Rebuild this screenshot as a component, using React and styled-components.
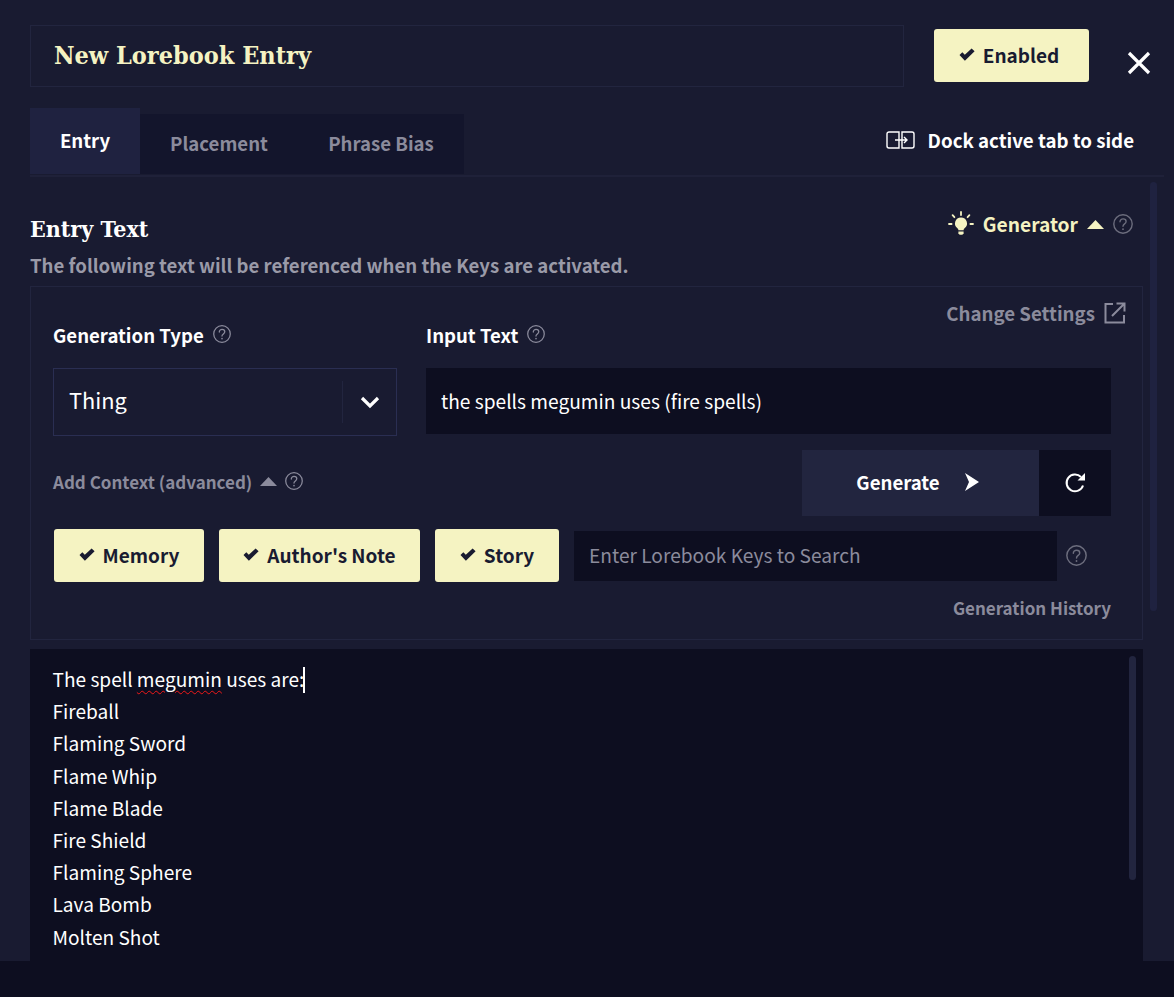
import React from "react";
import styled, { createGlobalStyle } from "styled-components";

const cream = "#f5f3c2";
const deep = "#0d0e20";
const panel = "#191b31";
const raised = "#22253f";
const muted = "#8b8b9c";

const GlobalStyle = createGlobalStyle`
  html, body {
    margin: 0;
    padding: 0;
    background: ${deep};
  }
  * {
    box-sizing: border-box;
  }
  body {
    font-family: "Noto Sans CJK SC", "Noto Sans", sans-serif;
    color: #fff;
  }
`;

const Modal = styled.div`
  width: 1174px;
  height: 961px;
  overflow: hidden;
  background: ${panel};
  padding: 25px 10px 0 30px;
`;

const Footer = styled.div`
  height: 36px;
  background: ${deep};
`;

const Header = styled.header`
  display: flex;
  align-items: flex-start;
`;

const TitleBox = styled.div`
  width: 874px;
  height: 62px;
  border: 1px solid ${raised};
  padding: 0 0 2px 23px;
  display: flex;
  align-items: center;
  font-family: "DejaVu Serif Condensed", "DejaVu Serif", serif;
  font-weight: 700;
  font-size: 25px;
  color: ${cream};
`;

const Toggle = styled.button`
  display: inline-flex;
  align-items: center;
  justify-content: center;
  gap: 8px;
  height: 53px;
  width: ${(p) => p.$width}px;
  flex: none;
  border: 0;
  border-radius: 3px;
  background: ${cream};
  color: ${panel};
  font: 600 19px/1 "Noto Sans CJK SC", sans-serif;
  padding: 0 0 2px;
`;

const EnabledToggle = styled(Toggle)`
  margin: 4px 0 0 30px;
  padding-right: 5px;
`;

const CloseButton = styled.button`
  background: none;
  border: 0;
  padding: 0;
  margin: 26px 0 0 38px;
  width: 24px;
  height: 24px;
  color: #fff;
  line-height: 0;
`;

const TabRow = styled.div`
  display: flex;
  justify-content: space-between;
  align-items: flex-end;
  margin-top: 21px;
  height: 69px;
  border-bottom: 2px solid #1f2139;
`;

const Tabs = styled.nav`
  display: flex;
  align-items: flex-end;
  padding-bottom: 1px;
`;

const Tab = styled.div`
  display: flex;
  align-items: center;
  justify-content: center;
  width: ${(p) => p.$width}px;
  height: ${(p) => (p.$active ? 66 : 60)}px;
  padding-bottom: 4px;
  background: ${(p) => (p.$active ? "#1f2240" : "#13152c")};
  color: ${(p) => (p.$active ? "#fff" : muted)};
  font-size: 18.6px;
  font-weight: 600;
`;

const DockAction = styled.div`
  display: flex;
  align-items: center;
  gap: 13px;
  font-size: 18.7px;
  font-weight: 600;
  padding: 0 30px 4px 0;
  height: 67px;
`;

const Content = styled.div`
  display: flex;
  gap: 7px;
  position: relative;
`;

const Main = styled.main`
  width: 1113px;
  flex: none;
`;

const ScrollTrack = styled.div`
  width: 7px;
  height: 429px;
  margin-top: 5px;
  border-radius: 4px;
  background: #1f2240;
  flex: none;
`;

const SectionHead = styled.div`
  display: flex;
  justify-content: space-between;
  align-items: center;
  padding: 38px 10px 0 0;
  height: 67px;
`;

const SectionTitle = styled.h2`
  margin: -2px 0 0;
  font-family: "DejaVu Serif Condensed", "DejaVu Serif", serif;
  font-weight: 700;
  font-size: 23px;
  line-height: 30px;
`;

const GeneratorToggle = styled.div`
  display: flex;
  align-items: center;
  gap: 9px;
  margin-top: -11px;
  color: ${cream};
  font-size: 19.2px;
  font-weight: 600;
`;

const Description = styled.p`
  margin: 0;
  height: 42px;
  padding-top: 7px;
  line-height: 28px;
  font-size: 18.6px;
  font-weight: 600;
  color: #9a9aa8;
`;

const GeneratorPanel = styled.section`
  position: relative;
  height: 354px;
  border: 1px solid ${raised};
  padding: 0 31px 0 22px;
`;

const ChangeSettings = styled.div`
  position: absolute;
  top: 12px;
  right: 16px;
  display: flex;
  align-items: center;
  gap: 9px;
  color: ${muted};
  font-size: 18.7px;
  font-weight: 600;
`;

const FieldRow = styled.div`
  display: grid;
  grid-template-columns: 344px 1fr;
  column-gap: 29px;
  padding-top: 33px;
`;

const Label = styled.label`
  display: flex;
  align-items: center;
  gap: 9px;
  height: 30px;
  padding-bottom: 2px;
  margin-bottom: 18px;
  font-size: 18.6px;
  font-weight: 600;
`;

const SelectBox = styled.div`
  display: flex;
  align-items: center;
  height: 68px;
  border: 1px solid #2a2e52;
  font-size: 21.8px;
  padding-left: 15px;
`;

const SelectValue = styled.span`
  flex: 1;
  padding-bottom: 6px;
`;

const SelectArrow = styled.span`
  display: flex;
  align-items: center;
  justify-content: center;
  width: 54px;
  height: 42px;
  border-left: 1px solid ${raised};
`;

const TextField = styled.input`
  display: block;
  width: ${(p) => (p.$width ? `${p.$width}px` : "100%")};
  height: ${(p) => p.$height}px;
  border: 0;
  outline: 0;
  background: ${deep};
  color: #fff;
  font: 400 19.15px/1 "Noto Sans CJK SC", sans-serif;
  padding: 0 15px ${(p) => p.$lift || 0}px;
  margin-top: 1px;
  &::placeholder {
    color: ${muted};
    opacity: 1;
  }
`;

const ActionRow = styled.div`
  display: flex;
  justify-content: space-between;
  align-items: center;
  margin-top: 14px;
  height: 66px;
`;

const AdvancedToggle = styled.div`
  display: flex;
  align-items: center;
  gap: 8px;
  padding-bottom: 4px;
  color: ${muted};
  font-size: 17px;
  font-weight: 600;
`;

const GenerateGroup = styled.div`
  display: flex;
`;

const GenerateButton = styled.button`
  display: flex;
  align-items: center;
  justify-content: center;
  gap: 24px;
  width: 237px;
  height: 66px;
  border: 0;
  padding: 0 6px 2px 0;
  background: #22253f;
  color: #fff;
  font: 600 18.6px/1 "Noto Sans CJK SC", sans-serif;
`;

const RetryButton = styled.button`
  display: flex;
  align-items: center;
  justify-content: center;
  width: 72px;
  height: 66px;
  border: 0;
  background: ${deep};
  color: #fff;
`;

const ContextRow = styled.div`
  display: flex;
  align-items: center;
  margin-top: 13px;
  padding-left: 1px;
  gap: 15px;
`;

const HelpSlot = styled.span`
  display: flex;
  margin-left: -6px;
`;

const HistoryLink = styled.div`
  text-align: right;
  margin-top: 12px;
  font-size: 17px;
  font-weight: 600;
  line-height: 28px;
  color: ${muted};
`;

const Editor = styled.div`
  position: relative;
  margin-top: 9px;
  height: 340px;
  background: ${deep};
  padding: 14px 22.5px;
  font-size: 19.1px;
  line-height: 32.2px;
`;

const EditorBar = styled.div`
  position: absolute;
  top: 7px;
  right: 7px;
  width: 7px;
  height: 224px;
  border-radius: 4px;
  background: #22253f;
`;

const Misspelt = styled.span`
  text-decoration: underline wavy #f01818 1.2px;
  text-underline-offset: 3px;
`;

const Caret = styled.span`
  display: inline-block;
  width: 2px;
  height: 26px;
  margin-left: -1px;
  background: #fff;
  vertical-align: -6px;
`;

function Help({ size = 18, color = "#8b8b9c" }) {
  return (
    <svg width={size} height={size} viewBox="0 0 20 20" fill="none" stroke={color} strokeWidth="1.4">
      <circle cx="10" cy="10" r="9.2" />
      <path d="M7 7.8c0-1.8 1.3-2.9 3.1-2.9s3 1.1 3 2.6c0 2.4-3.1 2.4-3.1 4.8" strokeLinecap="round" />
      <circle cx="10" cy="15.2" r="0.9" fill={color} stroke="none" />
    </svg>
  );
}

function Check() {
  return (
    <svg width="16" height="13" viewBox="0 0 16 13">
      <path d="M0.5 7l2.8-2.8 2.5 2.6L12.6 0.4 15.6 3.2 5.9 12.8z" fill="currentColor" />
    </svg>
  );
}

function CaretUp({ color }) {
  return (
    <svg width="17" height="9" viewBox="0 0 17 9">
      <path d="M8.5 0L17 9H0z" fill={color} />
    </svg>
  );
}

function Bulb() {
  return (
    <svg width="26" height="26" viewBox="0 0 26 26" fill={cream}>
      <path d="M13 6.5a6 6 0 0 0-3.6 10.8c.7.5 1 1.1 1 1.9h5.2c0-.8.3-1.4 1-1.9A6 6 0 0 0 13 6.5z" />
      <path d="M10.4 20.4h5.2v1.8l-1.2 1.6h-2.8l-1.2-1.6z" />
      <path d="M13 1v3M4.6 4.2l1.8 2M21.4 4.2l-1.8 2M1 13h2.6M22.4 13H25" stroke={cream} strokeWidth="1.8" strokeLinecap="round" />
    </svg>
  );
}

function DockIcon() {
  return (
    <svg width="29" height="18" viewBox="0 0 29 18" fill="none" stroke="#fff" strokeWidth="1.4">
      <path d="M13 1H3a2 2 0 0 0-2 2v12a2 2 0 0 0 2 2h10z" />
      <path d="M16 1h10a2 2 0 0 1 2 2v12a2 2 0 0 1-2 2H16z" />
      <path d="M9 9h12M18 6l3 3-3 3" />
    </svg>
  );
}

const spells = [
  "Fireball",
  "Flaming Sword",
  "Flame Whip",
  "Flame Blade",
  "Fire Shield",
  "Flaming Sphere",
  "Lava Bomb",
  "Molten Shot",
  "Magma Ball",
];

export default function App() {
  return (
    <>
      <GlobalStyle />
      <Modal>
        <Header>
          <TitleBox>New Lorebook Entry</TitleBox>
          <EnabledToggle $width={155}>
            <Check /> Enabled
          </EnabledToggle>
          <CloseButton aria-label="Close">
            <svg width="24" height="24" viewBox="0 0 24 24" stroke="currentColor" strokeWidth="3.2">
              <path d="M2 2l20 20M22 2L2 22" />
            </svg>
          </CloseButton>
        </Header>

        <TabRow>
          <Tabs>
            <Tab $active $width={110}>Entry</Tab>
            <Tab $width={158}>Placement</Tab>
            <Tab $width={166}>Phrase Bias</Tab>
          </Tabs>
          <DockAction>
            <DockIcon /> Dock active tab to side
          </DockAction>
        </TabRow>

        <Content>
          <Main>
            <SectionHead>
              <SectionTitle>Entry Text</SectionTitle>
              <GeneratorToggle>
                <Bulb />
                <span>Generator</span>
                <CaretUp color={cream} />
                <Help size={20} color="#6c6d7d" />
              </GeneratorToggle>
            </SectionHead>
            <Description>The following text will be referenced when the Keys are activated.</Description>

            <GeneratorPanel>
              <ChangeSettings>
                Change Settings
                <svg width="22" height="22" viewBox="0 0 22 22" fill="none" stroke={muted} strokeWidth="2">
                  <path d="M9 2H1.5v18.5H20V13" />
                  <path d="M8 14L20 2M12.5 1.5h8v8" />
                </svg>
              </ChangeSettings>

              <FieldRow>
                <div>
                  <Label>
                    Generation Type <Help size={18} />
                  </Label>
                  <SelectBox>
                    <SelectValue>Thing</SelectValue>
                    <SelectArrow>
                      <svg width="20" height="13" viewBox="0 0 20 13" fill="none" stroke="#fff" strokeWidth="3.2">
                        <path d="M2 2l8 8 8-8" />
                      </svg>
                    </SelectArrow>
                  </SelectBox>
                </div>
                <div>
                  <Label>
                    Input Text <Help size={18} />
                  </Label>
                  <TextField $height={66} readOnly value="the spells megumin uses (fire spells)" />
                </div>
              </FieldRow>

              <ActionRow>
                <AdvancedToggle>
                  Add Context (advanced)
                  <CaretUp color={muted} />
                  <Help size={18} />
                </AdvancedToggle>
                <GenerateGroup>
                  <GenerateButton>
                    Generate
                    <svg width="15" height="18" viewBox="0 0 15 18">
                      <path d="M1 0l14 9-14 9 4-9z" fill="#fff" />
                    </svg>
                  </GenerateButton>
                  <RetryButton aria-label="Retry">
                    <svg width="22" height="22" viewBox="0 0 22 22" fill="none" stroke="#fff" strokeWidth="2">
                      <path d="M19 13.5A8.4 8.4 0 1 1 17 5" />
                      <path d="M21 1v7.5h-7.5z" fill="#fff" stroke="none" />
                    </svg>
                  </RetryButton>
                </GenerateGroup>
              </ActionRow>

              <ContextRow>
                <Toggle $width={150}>
                  <Check /> Memory
                </Toggle>
                <Toggle $width={201}>
                  <Check /> Author's Note
                </Toggle>
                <Toggle $width={124}>
                  <Check /> Story
                </Toggle>
                <TextField $width={483} $height={50} $lift={2} placeholder="Enter Lorebook Keys to Search" readOnly />
                <HelpSlot>
                  <Help size={21} color="#6c6d7d" />
                </HelpSlot>
              </ContextRow>

              <HistoryLink>Generation History</HistoryLink>
            </GeneratorPanel>

            <Editor>
              <EditorBar />
              <div>
                The spell <Misspelt>megumin</Misspelt> uses are:
                <Caret />
              </div>
              {spells.map((spell) => (
                <div key={spell}>{spell}</div>
              ))}
            </Editor>
          </Main>
          <ScrollTrack />
        </Content>
      </Modal>
      <Footer />
    </>
  );
}
